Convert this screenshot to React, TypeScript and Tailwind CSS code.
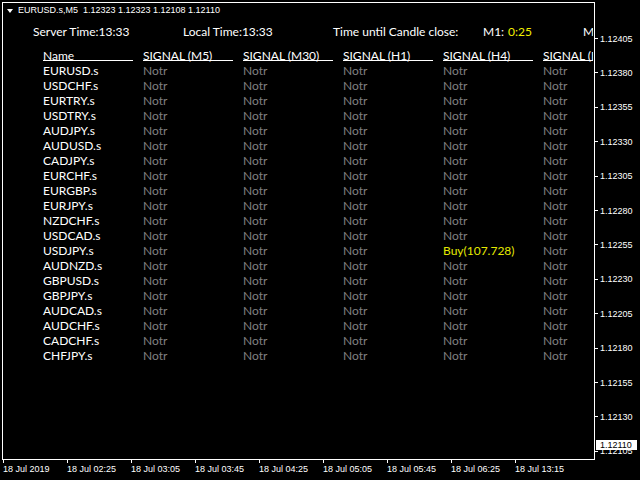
import React from "react";

const pairs = [
  "EURUSD.s", "USDCHF.s", "EURTRY.s", "USDTRY.s", "AUDJPY.s", "AUDUSD.s", "CADJPY.s",
  "EURCHF.s", "EURGBP.s", "EURJPY.s", "NZDCHF.s", "USDCAD.s", "USDJPY.s", "AUDNZD.s",
  "GBPUSD.s", "GBPJPY.s", "AUDCAD.s", "AUDCHF.s", "CADCHF.s", "CHFJPY.s",
];

const headers = ["Name", "SIGNAL (M5)", "SIGNAL (M30)", "SIGNAL (H1)", "SIGNAL (H4)", "SIGNAL (D1)"];

const prices = [
  "1.12405", "1.12380", "1.12355", "1.12330", "1.12305", "1.12280", "1.12255",
  "1.12230", "1.12205", "1.12180", "1.12155", "1.12130", "1.12105",
];

const times = [
  "18 Jul 2019", "18 Jul 02:25", "18 Jul 03:05", "18 Jul 03:45", "18 Jul 04:25",
  "18 Jul 05:05", "18 Jul 05:45", "18 Jul 06:25", "18 Jul 13:15",
];

function signalFor(pair: string, col: number) {
  if (pair === "USDJPY.s" && col === 3) return { text: "Buy(107.728)", buy: true };
  return { text: "Notr", buy: false };
}

export default function App() {
  return (
    <div className="w-[640px] h-[480px] bg-black overflow-hidden text-white font-['Liberation_Sans',sans-serif]">
      <div className="flex pl-[2px] pt-[2px]">
        {/* chart frame */}
        <div className="w-[593px] h-[458px] shrink-0 border border-white overflow-hidden flex flex-col">
          {/* title */}
          <div className="h-[16px] flex items-center pl-[4px] text-[9px] whitespace-pre">
            <div className="w-0 h-0 border-l-[3px] border-r-[3px] border-t-[4px] border-l-transparent border-r-transparent border-t-white" />
            <span className="ml-[5px]">EURUSD.s,M5  1.12323 1.12323 1.12108 1.12110</span>
          </div>
          {/* time row */}
          <div className="mt-[5px] h-[15px] leading-[15px] flex pl-[30px] font-['Lato',sans-serif] text-[12px] whitespace-nowrap">
            <div className="w-[150px] shrink-0">Server Time:13:33</div>
            <div className="w-[150px] shrink-0">Local Time:13:33</div>
            <div className="w-[150px] shrink-0">Time until Candle close:</div>
            <div className="w-[100px] shrink-0 flex">
              <span className="w-[25px]">M1:</span>
              <span className="text-[#f0f000]">0:25</span>
            </div>
            <div className="w-[10px] shrink-0 overflow-hidden">M5:</div>
          </div>
          {/* table header */}
          <div className="mt-[9px] h-[15px] flex pl-[40px] font-['Lato',sans-serif] text-[12px] whitespace-nowrap">
            {headers.map((h, i) => (
              <div key={h} className={i === 5 ? "w-[50px] shrink-0 overflow-hidden" : "w-[100px] shrink-0"}>
                <div className="w-[90px] h-[13px] border-b border-white leading-[15px]">{h}</div>
              </div>
            ))}
          </div>
          {/* rows */}
          {pairs.map((p) => (
            <div key={p} className="h-[15px] leading-[15px] flex pl-[40px] font-['Lato',sans-serif] text-[12px] whitespace-nowrap">
              <div className="w-[100px] shrink-0 text-white">{p}</div>
              {[0, 1, 2, 3, 4].map((c) => {
                const s = signalFor(p, c);
                return (
                  <div
                    key={c}
                    className={
                      s.buy
                        ? "w-[100px] shrink-0 text-[#e4e800]"
                        : c === 4
                        ? "w-[50px] shrink-0 text-[#808080]"
                        : "w-[100px] shrink-0 text-[#808080]"
                    }
                  >
                    {s.text}
                  </div>
                );
              })}
            </div>
          ))}
        </div>
        {/* price axis */}
        <div className="relative w-[45px] h-[458px] shrink-0 text-[9px]">
          {prices.map((v, i) => (
            <div
              key={v}
              className="absolute left-0 h-[12px] flex items-center whitespace-nowrap"
              style={{ top: 39 + i * 34.4 - 2 - 6.5 }}
            >
              <div className="w-[3px] h-px bg-white" />
              <span className="ml-[2px] leading-[12px]">{v}</span>
            </div>
          ))}
          <div className="absolute left-[1px] top-[438px] w-[41px] h-[10px] bg-white text-black pl-[4px] leading-[10px]">
            1.12110
          </div>
        </div>
      </div>
      {/* time axis */}
      <div className="flex pl-[3px] text-[9px] whitespace-nowrap">
        {times.map((t) => (
          <div key={t} className="w-[64px] shrink-0">
            <div className="w-px h-[3px] bg-white" />
            <div className="leading-[12px]">{t}</div>
          </div>
        ))}
      </div>
    </div>
  );
}
